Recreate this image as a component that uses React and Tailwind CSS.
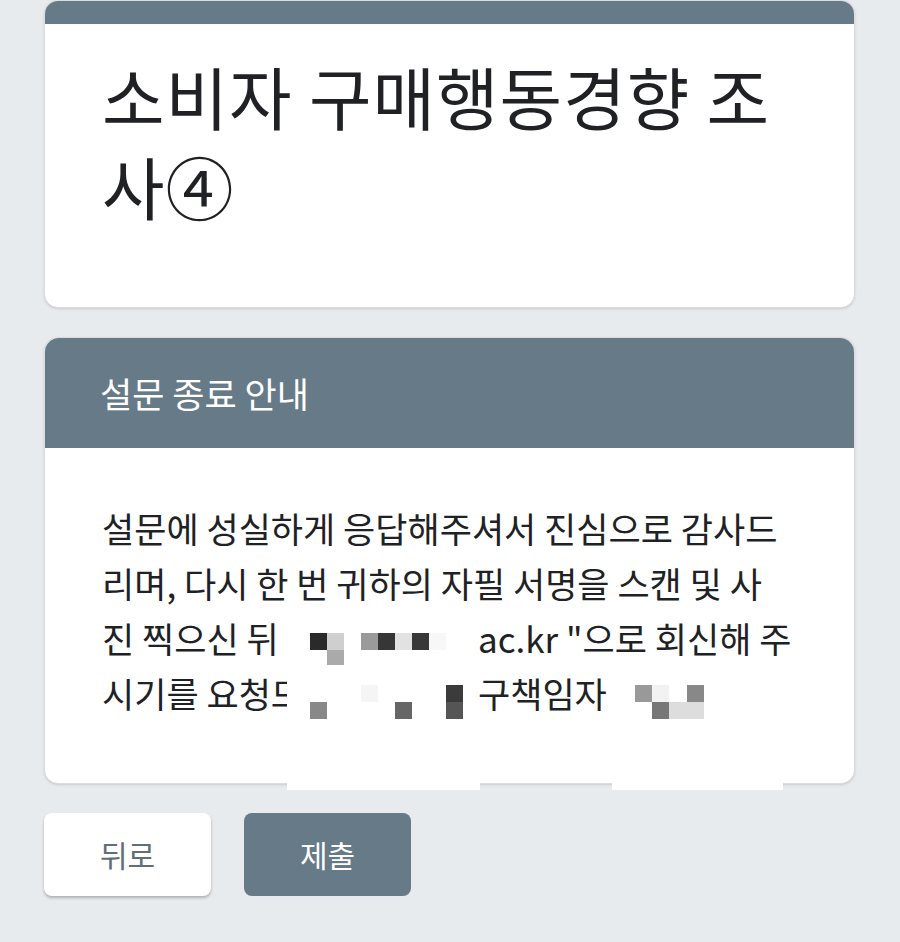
import React from 'react'

const FONT = "font-['Noto_Sans_CJK_KR','Noto_Sans',sans-serif]"

// pixelated redaction blocks, drawn as tiles
const Mosaic = ({ width, cells }) => (
  <svg width={width} height="55" className="shrink-0 block">
    {cells.map(([x, y, w, c], i) => (
      <rect key={i} x={x} y={y} width={w} height="17" fill={c} />
    ))}
  </svg>
)

const col = (n) => 23 + n * 17

const mosaicA = [
  [col(0), 23, 17, '#2a2a2a'],
  [col(1), 23, 17, '#cfcfcf'],
  [col(3), 23, 17, '#9a9a9a'],
  [col(4), 23, 17, '#363636'],
  [col(5), 23, 17, '#e2e2e2'],
  [col(6), 23, 17, '#383838'],
  [col(7), 23, 17, '#f7f7f7'],
  [col(1), 40, 17, '#aaaaaa'],
]

const mosaicB = [
  [col(3), 20, 17, '#f5f5f5'],
  [col(8), 20, 17, '#3b3b3b'],
  [col(0), 37, 17, '#888888'],
  [col(5), 37, 17, '#666666'],
  [col(8), 37, 17, '#555555'],
]

const mosaicC = [
  [24, 20, 17, '#999999'],
  [41, 20, 17, '#f2f2f2'],
  [76, 20, 17, '#888888'],
  [41, 37, 17, '#777777'],
  [58, 37, 35, '#dddddd'],
]

export default function App() {
  return (
    <div className={`min-h-screen bg-[#e8ebee] ${FONT} pl-[44px] pr-[45px]`}>
      <div className="bg-white rounded-[14px] border border-[#dadce0] shadow-sm overflow-hidden">
        <div className="h-[23px] bg-[#667b87]" />
        <h1 className="pl-[57px] pr-4 pt-[27px] pb-[76px] text-[68px] leading-[90px] tracking-[1px] text-[#202124] font-normal whitespace-nowrap">
          소비자 구매행동경향 조<br />사④
        </h1>
      </div>

      <div className="relative mt-[29px] bg-white rounded-[14px] border border-[#dadce0] shadow-sm">
        <div className="h-[110px] bg-[#667b87] rounded-t-[14px] flex items-center pl-[55px]">
          <h2 className="text-white text-[35px] font-normal">설문 종료 안내</h2>
        </div>
        <div className="pl-[57px] pt-[52px] pb-[63px] text-[35px] leading-[55px] text-[#202124] whitespace-nowrap">
          <div>설문에 성실하게 응답해주셔서 진심으로 감사드</div>
          <div>리며, 다시 한 번 귀하의 자필 서명을 스캔 및 사</div>
          <div className="flex">
            <span className="w-[185px] shrink-0">진 찍으신 뒤</span>
            <Mosaic width={191} cells={mosaicA} />
            <span>ac.kr "으로 회신해 주</span>
          </div>
          <div className="flex">
            <span className="w-[185px] shrink-0 overflow-hidden">시기를 요청드</span>
            <Mosaic width={191} cells={mosaicB} />
            <span className="w-[133px] shrink-0">구책임자</span>
            <Mosaic width={100} cells={mosaicC} />
          </div>
        </div>
        <div className="absolute top-full left-[242px] w-[193px] h-[7px] bg-white" />
        <div className="absolute top-full left-[567px] w-[171px] h-[7px] bg-white" />
      </div>

      <div className="mt-[29px] flex gap-[33px] pb-12">
        <button className="w-[167px] h-[83px] bg-white rounded-[8px] shadow-[0_2px_3px_rgba(0,0,0,0.25)] text-[30px] text-[#5f6e78]">
          뒤로
        </button>
        <button className="w-[167px] h-[83px] bg-[#667b87] rounded-[8px] text-[30px] text-white">
          제출
        </button>
      </div>
    </div>
  )
}
